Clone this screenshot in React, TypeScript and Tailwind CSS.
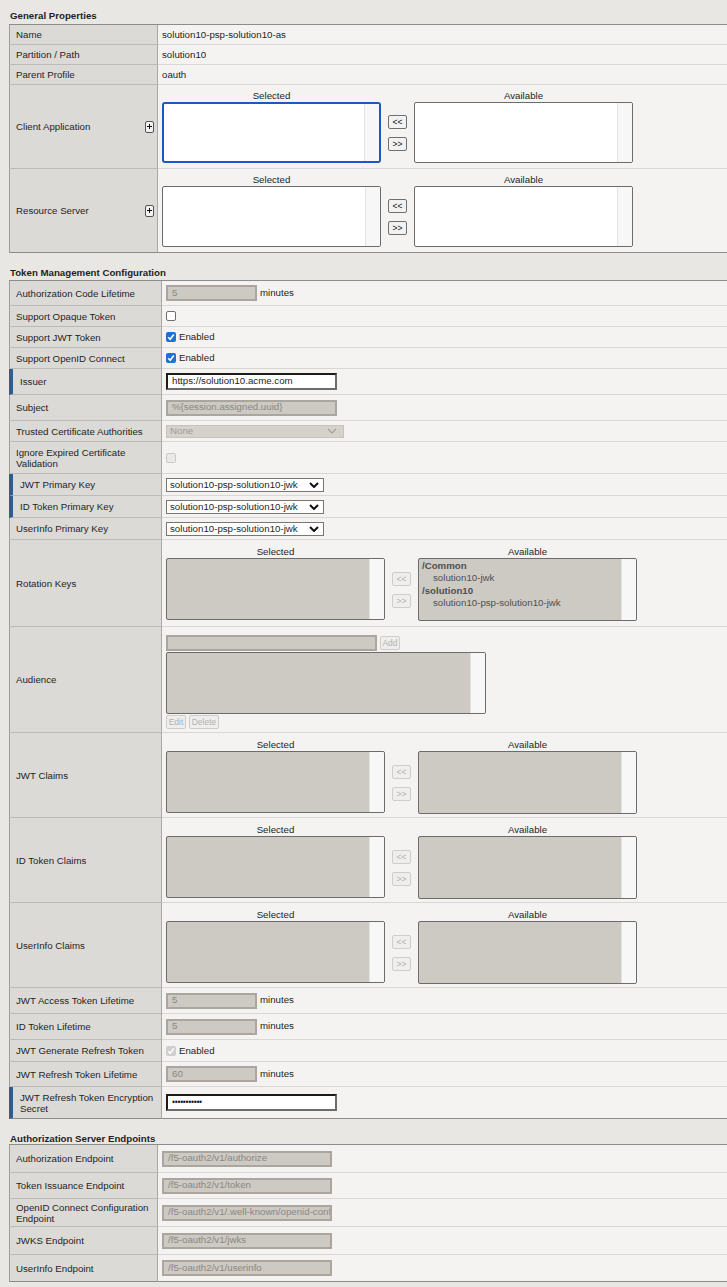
import React from "react";

type RowProps = {
  label: string;
  h: string;
  lw: string;
  mark?: boolean;
  plus?: boolean;
  last?: boolean;
  top?: boolean;
  children?: React.ReactNode;
};

// one table row: grey label cell on the left, light value cell on the right
const Row = ({ label, h, lw, mark, plus, last, top, children }: RowProps) => (
  <div className={`flex ${h}`}>
    <div
      className={`${lw} shrink-0 flex items-center justify-between pr-[3px] bg-[#dcdad6] border-r border-r-[#a9a8a5] ${
        mark
          ? "border-l-4 border-l-[#2f5d8f] pl-[7px]"
          : "border-l border-l-[#9c9c9c] pl-[6px]"
      } ${last ? "border-b border-b-[#8c8c8c]" : "border-b border-b-[#bcbab6]"}`}
    >
      <span className="leading-[11px]">{label}</span>
      {plus && (
        <div className="w-[9px] h-[12px] border border-[#555] rounded-[2px] flex items-center justify-center bg-[#f2f2f2]">
          <svg width="5" height="5" viewBox="0 0 5 5">
            <path d="M2.5 0 V5 M0 2.5 H5" stroke="#111" strokeWidth="1" />
          </svg>
        </div>
      )}
    </div>
    <div
      className={`flex-1 min-w-0 bg-[#f4f3f1] pl-[4px] flex ${
        top ? "items-start" : "items-center"
      } ${last ? "border-b border-b-[#8c8c8c]" : "border-b border-b-[#d9d7d3]"}`}
    >
      {children}
    </div>
  </div>
);

const Title = ({ text, cls }: { text: string; cls: string }) => (
  <div className={`${cls} pl-[10px] font-bold leading-[11px]`}>{text}</div>
);

const DisabledInput = ({ w, value }: { w: string; value: string }) => (
  <div
    className={`${w} h-[16px] border-2 border-[#aaa69f] bg-[#cdc9c3] text-[#8a8884] pl-[4px] flex items-center overflow-hidden whitespace-nowrap`}
  >
    {value}
  </div>
);

const TextInput = ({ value, small }: { value: string; small?: boolean }) => (
  <div
    className={`w-[171px] h-[17px] border-2 border-t-[#1c1c1c] border-l-[#1c1c1c] border-r-[#6c6c6c] border-b-[#6c6c6c] bg-white pl-[4px] flex items-center ${
      small ? "text-[8.6px] tracking-[-0.3px]" : ""
    }`}
  >
    {value}
  </div>
);

const Minutes = ({ value }: { value: string }) => (
  <div className="flex items-center gap-[3px]">
    <DisabledInput w="w-[91px]" value={value} />
    <span>minutes</span>
  </div>
);

const Check = ({ on, disabled }: { on?: boolean; disabled?: boolean }) => {
  if (on)
    return (
      <div
        className={`w-[10px] h-[10px] rounded-[2px] flex items-center justify-center ${
          disabled ? "bg-[#cfcfcf]" : "bg-[#1f6fd6]"
        }`}
      >
        <svg width="8" height="8" viewBox="0 0 8 8">
          <path d="M1.2 4.2 L3.2 6.2 L6.8 1.6" fill="none" stroke="white" strokeWidth="1.6" />
        </svg>
      </div>
    );
  return (
    <div
      className={`w-[10px] h-[10px] rounded-[2px] border ${
        disabled ? "border-[#cbc9c5] bg-[#ebe9e6]" : "border-[#6f6f6f] bg-white"
      }`}
    />
  );
};

const Enabled = ({ disabled }: { disabled?: boolean }) => (
  <div className="flex items-center gap-[3px] pt-[1px]">
    <Check on disabled={disabled} />
    <span>Enabled</span>
  </div>
);

const Chevron = ({ color, bold }: { color: string; bold?: boolean }) => (
  <svg width="10" height="6" viewBox="0 0 10 6">
    <path d="M1 1 L5 5 L9 1" fill="none" stroke={color} strokeWidth={bold ? 2 : 1.2} />
  </svg>
);

const KeySelect = () => (
  <div className="w-[158px] h-[14px] border border-[#767676] bg-white flex items-center justify-between pl-[3px] pr-[4px]">
    <span className="leading-none">solution10-psp-solution10-jwk</span>
    <Chevron color="#111" bold />
  </div>
);

const SmallBtn = ({ label, w, disabled }: { label: string; w: string; disabled?: boolean }) => (
  <div
    className={`${w} h-[14px] border rounded-[2px] flex items-center justify-center text-[8.5px] leading-none ${
      disabled
        ? "border-[#cfcdca] text-[#b2b0ac] bg-[#efeeec]"
        : "border-[#6f6f6f] text-[#111] bg-[#f2f2f2]"
    }`}
  >
    {label}
  </div>
);

const ListBox = ({
  w,
  h,
  disabled,
  focus,
  children,
}: {
  w: string;
  h: string;
  disabled?: boolean;
  focus?: boolean;
  children?: React.ReactNode;
}) => (
  <div
    className={`${w} ${h} flex overflow-hidden ${
      focus ? "border-2 border-[#1c58c0] rounded-[3px]" : "border border-[#6c6c6c] rounded-[2px]"
    } ${disabled ? "bg-[#cdc9c3]" : "bg-white"}`}
  >
    <div className="flex-1 min-w-0 pl-[2px] text-[#505050]">{children}</div>
    <div className="w-[15px] bg-[#f7f7f7] border-l border-l-[#e3e3e3]" />
  </div>
);

const DualList = ({
  disabled,
  focus,
  token,
  available,
}: {
  disabled?: boolean;
  focus?: boolean;
  token?: boolean;
  available?: React.ReactNode;
}) => (
  <div className={`flex gap-[7px] ${token ? "pt-[6px]" : "pt-[5px]"}`}>
    <div className="w-[219px]">
      <div className="text-center leading-[11px] mb-[1px]">Selected</div>
      <ListBox w="w-[219px]" h={token ? "h-[62px]" : "h-[61px]"} disabled={disabled} focus={focus} />
    </div>
    <div className={`flex flex-col gap-[8px] ${token ? "pt-[26px]" : "pt-[25px]"}`}>
      <SmallBtn label="<<" w="w-[19px]" disabled={disabled} />
      <SmallBtn label=">>" w="w-[19px]" disabled={disabled} />
    </div>
    <div className="w-[219px]">
      <div className="text-center leading-[11px] mb-[1px]">Available</div>
      <ListBox w="w-[219px]" h={token ? "h-[63px]" : "h-[61px]"} disabled={disabled}>
        {available}
      </ListBox>
    </div>
  </div>
);

const RotationAvailable = () => (
  <div className="leading-[12.4px] pl-[1px] pt-[1px]">
    <div className="font-bold">/Common</div>
    <div className="pl-[11px]">solution10-jwk</div>
    <div className="font-bold">/solution10</div>
    <div className="pl-[11px]">solution10-psp-solution10-jwk</div>
  </div>
);

const G = "w-[149px]";
const T = "w-[153px]";

export default function App() {
  return (
    <div className="min-h-screen w-full bg-[#e9e7e3] text-[#1e1e1e] text-[9.7px] font-['Liberation_Sans',Arial,sans-serif] pb-[6px]">
      <Title text="General Properties" cls="pt-[10px] pb-[3px]" />
      <div className="ml-[9px] border-t border-t-[#8c8c8c]">
        <Row label="Name" h="h-[20px]" lw={G}>
          <span className="pt-[1px]">solution10-psp-solution10-as</span>
        </Row>
        <Row label="Partition / Path" h="h-[20px]" lw={G}>
          <span className="pt-[1px]">solution10</span>
        </Row>
        <Row label="Parent Profile" h="h-[20px]" lw={G}>
          <span className="pt-[1px]">oauth</span>
        </Row>
        <Row label="Client Application" h="h-[84px]" lw={G} plus top>
          <DualList focus />
        </Row>
        <Row label="Resource Server" h="h-[84px]" lw={G} plus top last>
          <DualList />
        </Row>
      </div>

      <Title text="Token Management Configuration" cls="pt-[14px] pb-[2px]" />
      <div className="ml-[9px] border-t border-t-[#8c8c8c]">
        <Row label="Authorization Code Lifetime" h="h-[25px]" lw={T}>
          <Minutes value="5" />
        </Row>
        <Row label="Support Opaque Token" h="h-[21px]" lw={T}>
          <Check />
        </Row>
        <Row label="Support JWT Token" h="h-[21px]" lw={T}>
          <Enabled />
        </Row>
        <Row label="Support OpenID Connect" h="h-[21px]" lw={T}>
          <Enabled />
        </Row>
        <Row label="Issuer" h="h-[26px]" lw={T} mark>
          <TextInput value="https://solution10.acme.com" />
        </Row>
        <Row label="Subject" h="h-[26px]" lw={T}>
          <DisabledInput w="w-[171px]" value="%{session.assigned.uuid}" />
        </Row>
        <Row label="Trusted Certificate Authorities" h="h-[21px]" lw={T}>
          <div className="w-[178px] h-[13px] border border-[#c6c2bc] bg-[#d5d1cb] text-[#a19d98] flex items-center justify-between pl-[3px] pr-[6px]">
            <span className="leading-none">None</span>
            <Chevron color="#a19d98" />
          </div>
        </Row>
        <Row label="Ignore Expired Certificate Validation" h="h-[32px]" lw={T}>
          <Check disabled />
        </Row>
        <Row label="JWT Primary Key" h="h-[22px]" lw={T} mark>
          <KeySelect />
        </Row>
        <Row label="ID Token Primary Key" h="h-[22px]" lw={T} mark>
          <KeySelect />
        </Row>
        <Row label="UserInfo Primary Key" h="h-[22px]" lw={T}>
          <KeySelect />
        </Row>
        <Row label="Rotation Keys" h="h-[87px]" lw={T} top>
          <DualList disabled token available={<RotationAvailable />} />
        </Row>
        <Row label="Audience" h="h-[106px]" lw={T} top>
          <div className="flex flex-col pt-[8px]">
            <div className="flex items-center gap-[3px]">
              <DisabledInput w="w-[211px]" value="" />
              <SmallBtn label="Add" w="w-[20px]" disabled />
            </div>
            <div className="mt-[1px]">
              <ListBox w="w-[320px]" h="h-[62px]" disabled />
            </div>
            <div className="flex gap-[3px] mt-[1px]">
              <SmallBtn label="Edit" w="w-[20px]" disabled />
              <SmallBtn label="Delete" w="w-[30px]" disabled />
            </div>
          </div>
        </Row>
        <Row label="JWT Claims" h="h-[85px]" lw={T} top>
          <DualList disabled token />
        </Row>
        <Row label="ID Token Claims" h="h-[85px]" lw={T} top>
          <DualList disabled token />
        </Row>
        <Row label="UserInfo Claims" h="h-[85px]" lw={T} top>
          <DualList disabled token />
        </Row>
        <Row label="JWT Access Token Lifetime" h="h-[26px]" lw={T}>
          <Minutes value="5" />
        </Row>
        <Row label="ID Token Lifetime" h="h-[26px]" lw={T}>
          <Minutes value="5" />
        </Row>
        <Row label="JWT Generate Refresh Token" h="h-[22px]" lw={T}>
          <Enabled disabled />
        </Row>
        <Row label="JWT Refresh Token Lifetime" h="h-[25px]" lw={T}>
          <Minutes value="60" />
        </Row>
        <Row label="JWT Refresh Token Encryption Secret" h="h-[32px]" lw={T} mark last>
          <TextInput value="•••••••••••" small />
        </Row>
      </div>

      <Title text="Authorization Server Endpoints" cls="pt-[14px]" />
      <div className="ml-[9px] border-t border-t-[#8c8c8c]">
        <Row label="Authorization Endpoint" h="h-[28px]" lw={G}>
          <DisabledInput w="w-[170px]" value="/f5-oauth2/v1/authorize" />
        </Row>
        <Row label="Token Issuance Endpoint" h="h-[26px]" lw={G}>
          <DisabledInput w="w-[170px]" value="/f5-oauth2/v1/token" />
        </Row>
        <Row label="OpenID Connect Configuration Endpoint" h="h-[28px]" lw={G}>
          <DisabledInput w="w-[170px]" value="/f5-oauth2/v1/.well-known/openid-configuration" />
        </Row>
        <Row label="JWKS Endpoint" h="h-[28px]" lw={G}>
          <DisabledInput w="w-[170px]" value="/f5-oauth2/v1/jwks" />
        </Row>
        <Row label="UserInfo Endpoint" h="h-[27px]" lw={G} last>
          <DisabledInput w="w-[170px]" value="/f5-oauth2/v1/userinfo" />
        </Row>
      </div>
    </div>
  );
}
